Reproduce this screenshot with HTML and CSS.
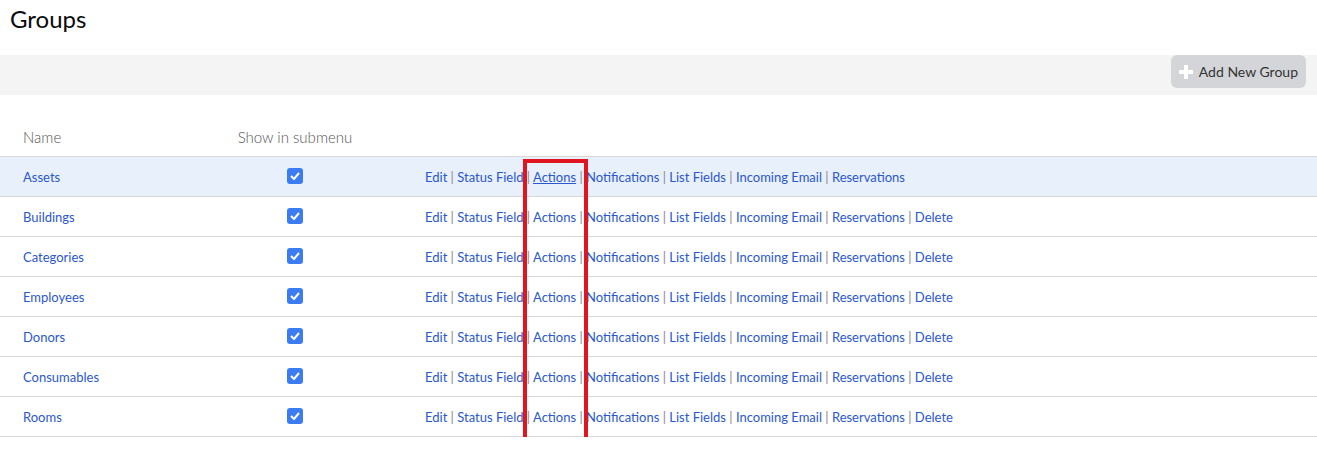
FILE: index.html
```html
<!DOCTYPE html>
<html lang="en">
<head>
    <meta charset="UTF-8">
    <title>Groups</title>
    <link rel="stylesheet" href="styles.css">
</head>
<body>
    <h1 class="page-title">Groups</h1>

    <div class="toolbar">
        <button type="button" class="add-btn">
            <svg width="14" height="14" viewBox="0 0 14 14"><path d="M7 0v14M0 7h14" stroke="#fff" stroke-width="4"/></svg>
            Add New Group
        </button>
    </div>

    <div class="table-wrap">
        <table class="groups">
            <thead>
                <tr>
                    <th class="col-name">Name</th>
                    <th class="col-show">Show in submenu</th>
                    <th></th>
                </tr>
            </thead>
            <tbody>
                <tr class="hover">
                    <td><a href="#">Assets</a></td>
                    <td class="col-show"><span class="check"><svg width="10" height="8" viewBox="0 0 10 8"><path d="M1 4l3 3 5-6" fill="none" stroke="#fff" stroke-width="2"/></svg></span></td>
                    <td class="links"><a href="#">Edit</a> | <a href="#">Status Field</a> | <a href="#" class="hovered">Actions</a> | <a href="#">Notifications</a> | <a href="#">List Fields</a> | <a href="#">Incoming Email</a> | <a href="#">Reservations</a></td>
                </tr>
                <tr>
                    <td><a href="#">Buildings</a></td>
                    <td class="col-show"><span class="check"><svg width="10" height="8" viewBox="0 0 10 8"><path d="M1 4l3 3 5-6" fill="none" stroke="#fff" stroke-width="2"/></svg></span></td>
                    <td class="links"><a href="#">Edit</a> | <a href="#">Status Field</a> | <a href="#">Actions</a> | <a href="#">Notifications</a> | <a href="#">List Fields</a> | <a href="#">Incoming Email</a> | <a href="#">Reservations</a> | <a href="#">Delete</a></td>
                </tr>
                <tr>
                    <td><a href="#">Categories</a></td>
                    <td class="col-show"><span class="check"><svg width="10" height="8" viewBox="0 0 10 8"><path d="M1 4l3 3 5-6" fill="none" stroke="#fff" stroke-width="2"/></svg></span></td>
                    <td class="links"><a href="#">Edit</a> | <a href="#">Status Field</a> | <a href="#">Actions</a> | <a href="#">Notifications</a> | <a href="#">List Fields</a> | <a href="#">Incoming Email</a> | <a href="#">Reservations</a> | <a href="#">Delete</a></td>
                </tr>
                <tr>
                    <td><a href="#">Employees</a></td>
                    <td class="col-show"><span class="check"><svg width="10" height="8" viewBox="0 0 10 8"><path d="M1 4l3 3 5-6" fill="none" stroke="#fff" stroke-width="2"/></svg></span></td>
                    <td class="links"><a href="#">Edit</a> | <a href="#">Status Field</a> | <a href="#">Actions</a> | <a href="#">Notifications</a> | <a href="#">List Fields</a> | <a href="#">Incoming Email</a> | <a href="#">Reservations</a> | <a href="#">Delete</a></td>
                </tr>
                <tr>
                    <td><a href="#">Donors</a></td>
                    <td class="col-show"><span class="check"><svg width="10" height="8" viewBox="0 0 10 8"><path d="M1 4l3 3 5-6" fill="none" stroke="#fff" stroke-width="2"/></svg></span></td>
                    <td class="links"><a href="#">Edit</a> | <a href="#">Status Field</a> | <a href="#">Actions</a> | <a href="#">Notifications</a> | <a href="#">List Fields</a> | <a href="#">Incoming Email</a> | <a href="#">Reservations</a> | <a href="#">Delete</a></td>
                </tr>
                <tr>
                    <td><a href="#">Consumables</a></td>
                    <td class="col-show"><span class="check"><svg width="10" height="8" viewBox="0 0 10 8"><path d="M1 4l3 3 5-6" fill="none" stroke="#fff" stroke-width="2"/></svg></span></td>
                    <td class="links"><a href="#">Edit</a> | <a href="#">Status Field</a> | <a href="#">Actions</a> | <a href="#">Notifications</a> | <a href="#">List Fields</a> | <a href="#">Incoming Email</a> | <a href="#">Reservations</a> | <a href="#">Delete</a></td>
                </tr>
                <tr>
                    <td><a href="#">Rooms</a></td>
                    <td class="col-show"><span class="check"><svg width="10" height="8" viewBox="0 0 10 8"><path d="M1 4l3 3 5-6" fill="none" stroke="#fff" stroke-width="2"/></svg></span></td>
                    <td class="links"><a href="#">Edit</a> | <a href="#">Status Field</a> | <a href="#">Actions</a> | <a href="#">Notifications</a> | <a href="#">List Fields</a> | <a href="#">Incoming Email</a> | <a href="#">Reservations</a> | <a href="#">Delete</a></td>
                </tr>
            </tbody>
        </table>
        <div class="highlight-box"></div>
    </div>
</body>
</html>
```

FILE: styles.css
```css
body {
    font-family: Lato, "Open Sans", Arial, sans-serif;
    margin: 0;
    padding: 0;
    background-color: #ffffff;
    color: #333333;
}
.page-title {
    margin: 0;
    padding: 5px 10px 0;
    height: 50px;
    font-size: 24px;
    font-weight: 400;
    line-height: 28px;
    color: #0b0b0b;
}
.toolbar {
    display: flex;
    justify-content: flex-end;
    height: 40px;
    padding-right: 11px;
    background-color: #f4f4f4;
}
.add-btn {
    display: flex;
    align-items: center;
    gap: 6px;
    height: 33px;
    padding: 0 8px;
    background-color: #d4d5d9;
    color: #333333;
    border: none;
    border-radius: 6px;
    font-family: inherit;
    font-size: 14px;
    cursor: pointer;
}
.table-wrap {
    position: relative;
    margin-top: 22px;
}
.groups {
    width: 100%;
    border-collapse: collapse;
    font-size: 13px;
}
.groups th {
    height: 39px;
    padding: 0 0 0 23px;
    text-align: left;
    font-size: 15px;
    font-weight: 300;
    color: #555555;
    border-bottom: 1px solid #d8d8d8;
}
.groups td {
    height: 39px;
    padding: 0 0 0 23px;
    border-bottom: 1px solid #d8d8d8;
}
.groups .col-name {
    width: 192px;
}
.groups .col-show {
    width: 160px;
    padding: 0;
    text-align: center;
}
.groups td.links {
    padding-left: 50px;
    color: #888888;
}
.groups tr.hover td {
    background-color: #e8f0fc;
}
.groups a {
    color: #2b57cf;
    text-decoration: none;
}
.groups a.hovered {
    text-decoration: underline;
}
.check {
    display: inline-flex;
    align-items: center;
    justify-content: center;
    width: 16px;
    height: 16px;
    margin-top: -4px;
    border-radius: 3px;
    background-color: #3b7cf2;
    vertical-align: middle;
}
.highlight-box {
    position: absolute;
    left: 523px;
    top: 42px;
    width: 57px;
    height: 275px;
    border: 4px solid #e0151f;
}
```
